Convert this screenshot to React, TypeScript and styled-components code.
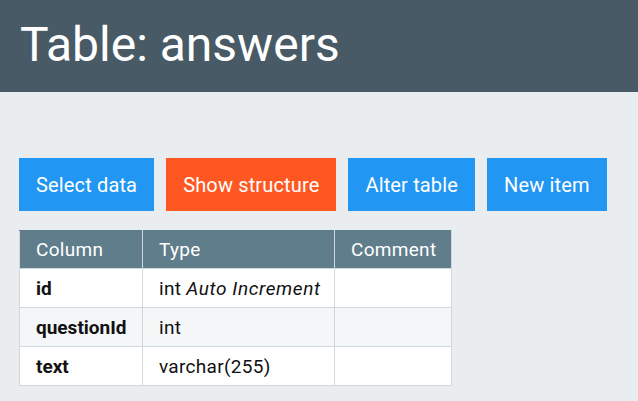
import React from "react";
import styled, { createGlobalStyle } from "styled-components";

const Global = createGlobalStyle`
  html, body { margin: 0; padding: 0; }
  body {
    background: #e9edf0;
    font-family: Roboto, "Liberation Sans", sans-serif;
    width: 638px;
    height: 401px;
    overflow: hidden;
  }
`;

const Header = styled.header`
  background: #475a65;
  height: 92px;
  box-sizing: border-box;
  padding: 17px 20px 0;
`;

const Title = styled.h1`
  margin: 0;
  font-weight: 400;
  font-size: 48px;
  line-height: 56px;
  color: #ffffff;
`;

const Main = styled.main`
  padding: 66px 19px 0;
  display: flex;
  flex-direction: column;
  gap: 19px;
`;

const Toolbar = styled.div`
  display: flex;
  gap: 12px;
`;

const Button = styled.button<{ $active?: boolean }>`
  height: 53px;
  padding: 0 17px;
  border: none;
  margin: 0;
  background: ${(p) => (p.$active ? "#ff5722" : "#2196f3")};
  color: #ffffff;
  font-family: Roboto, "Liberation Sans", sans-serif;
  font-size: 20px;
  letter-spacing: 0.15px;
  display: flex;
  align-items: center;
  cursor: pointer;
`;

const Table = styled.table`
  border-collapse: collapse;
  background: #ffffff;
  font-size: 19px;
  letter-spacing: 0.3px;
  width: 432px;
  table-layout: fixed;
`;

const Th = styled.th<{ $w: number }>`
  width: ${(p) => p.$w}px;
  background: #607d8b;
  color: #ffffff;
  font-weight: 400;
  text-align: left;
  height: 38px;
  box-sizing: border-box;
  padding: 0 16px;
  border: 1px solid #cfd8dc;
  border-top-color: #607d8b;
`;

const Row = styled.tr<{ $alt?: boolean }>`
  background: ${(p) => (p.$alt ? "#f4f6f8" : "#ffffff")};
`;

const Td = styled.td<{ $bold?: boolean }>`
  height: 39px;
  box-sizing: border-box;
  padding: 0 16px;
  border: 1px solid #cfd8dc;
  color: #111;
  font-weight: ${(p) => (p.$bold ? 700 : 400)};
  letter-spacing: ${(p) => (p.$bold ? "0" : "0.3px")};
  white-space: nowrap;
`;

const Extra = styled.i`
  font-style: italic;
  letter-spacing: 0.6px;
`;

const rows = [
  { name: "id", type: "int", extra: "Auto Increment" },
  { name: "questionId", type: "int" },
  { name: "text", type: "varchar(255)" },
];

export default function App() {
  return (
    <>
      <Global />
      <Header>
        <Title>Table: answers</Title>
      </Header>
      <Main>
        <Toolbar>
          <Button>Select data</Button>
          <Button $active>Show structure</Button>
          <Button>Alter table</Button>
          <Button>New item</Button>
        </Toolbar>
        <div>
          <Table>
            <thead>
              <tr>
                <Th $w={123}>Column</Th>
                <Th $w={192}>Type</Th>
                <Th $w={117}>Comment</Th>
              </tr>
            </thead>
            <tbody>
              {rows.map((r, i) => (
                <Row key={r.name} $alt={i % 2 === 1}>
                  <Td $bold>{r.name}</Td>
                  <Td>
                    {r.type}
                    {r.extra ? <> <Extra>{r.extra}</Extra></> : null}
                  </Td>
                  <Td />
                </Row>
              ))}
            </tbody>
          </Table>
        </div>
      </Main>
    </>
  );
}
